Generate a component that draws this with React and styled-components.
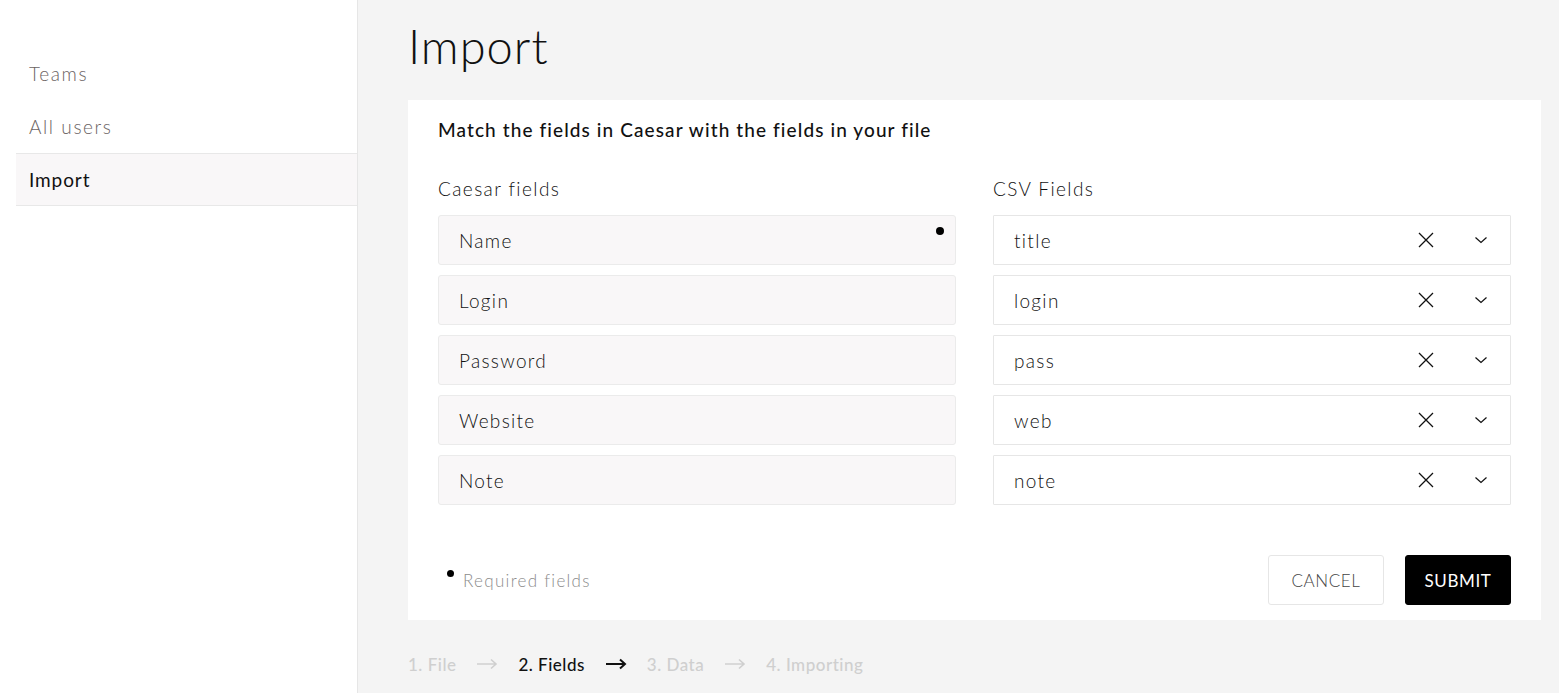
import React from "react";
import styled, { createGlobalStyle } from "styled-components";

const GlobalStyle = createGlobalStyle`
    html, body {
        margin: 0;
        padding: 0;
        background: #f4f4f4;
        font-family: Lato, "Open Sans", sans-serif;
    }
    * {
        box-sizing: border-box;
    }
`;

const Page = styled.div`
    display: flex;
    min-height: 693px;
`;

const SideBar = styled.nav`
    width: 358px;
    flex-shrink: 0;
    background: #fff;
    border-right: 1px solid #e6e6e6;
    padding: 47px 0 0 16px;
`;

const NavItem = styled.div`
    height: 53px;
    display: flex;
    align-items: center;
    padding-left: 13px;
    font-size: 19px;
    letter-spacing: ${props => (props.active ? 0.9 : 1.6)}px;
    font-weight: ${props => (props.active ? 400 : 300)};
    color: ${props => (props.active ? "#111" : "#6b6363")};
    background: ${props => (props.active ? "#f9f7f8" : "transparent")};
    border-top: ${props => (props.active ? "1px solid #e8e8e8" : "none")};
    border-bottom: ${props => (props.active ? "1px solid #e8e8e8" : "none")};
`;

const Main = styled.main`
    flex: 1;
    padding: 0 18px 0 50px;
`;

const Title = styled.h1`
    margin: 0;
    height: 100px;
    padding-top: 18px;
    font-size: 47px;
    font-weight: 300;
    letter-spacing: 1px;
    color: #111;
    line-height: 56px;
`;

const Card = styled.section`
    background: #fff;
    padding: 18px 30px 15px 30px;
`;

const CardHeading = styled.h2`
    margin: 0 0 35px;
    font-size: 19px;
    font-weight: 500;
    letter-spacing: 1.1px;
    color: #111;
    line-height: 24px;
`;

const Columns = styled.div`
    display: grid;
    grid-template-columns: 518px 518px;
    justify-content: space-between;
`;

const Column = styled.div`
    display: flex;
    flex-direction: column;
    gap: 10px;
`;

const ColumnLabel = styled.div`
    font-size: 19px;
    font-weight: 300;
    letter-spacing: 1.4px;
    color: #111;
    line-height: 24px;
    margin-bottom: 4px;
`;

const FieldBox = styled.div`
    position: relative;
    height: 50px;
    display: flex;
    align-items: center;
    padding: 0 17px 0 20px;
    font-size: 19px;
    font-weight: 300;
    letter-spacing: 1.3px;
    color: #111;
    background: ${props => (props.filled ? "#f9f7f8" : "#fff")};
    border: 1px solid ${props => (props.filled ? "#ebebeb" : "#e6e6e6")};
    border-radius: ${props => (props.filled ? "3px" : "1px")};
`;

const RequiredDot = styled.span`
    position: absolute;
    top: 11px;
    right: 11px;
    width: 8px;
    height: 8px;
    border-radius: 50%;
    background: #000;
`;

const FieldValue = styled.span`
    flex: 1;
`;

const IconButton = styled.span`
    display: flex;
    align-items: center;
    justify-content: center;
    width: 24px;
    height: 24px;
    margin-left: ${props => props.gap || 0}px;
`;

const Footer = styled.div`
    display: flex;
    align-items: center;
    justify-content: space-between;
    margin-top: 50px;
`;

const Legend = styled.div`
    display: flex;
    align-items: flex-start;
    gap: 9px;
    padding-left: 9px;
    font-size: 17px;
    font-weight: 300;
    letter-spacing: 1.3px;
    color: #8c8c8c;
`;

const LegendDot = styled.span`
    width: 7px;
    height: 7px;
    border-radius: 50%;
    background: #000;
`;

const Buttons = styled.div`
    display: flex;
    gap: 21px;
`;

const Button = styled.button`
    width: ${props => (props.primary ? 106 : 116)}px;
    height: 50px;
    padding: 0;
    font-family: inherit;
    font-size: 17px;
    letter-spacing: 0.6px;
    font-weight: ${props => (props.primary ? 400 : 300)};
    text-transform: uppercase;
    color: ${props => (props.primary ? "#fff" : "#444")};
    background: ${props => (props.primary ? "#000" : "#fff")};
    border: 1px solid ${props => (props.primary ? "#000" : "#e6e6e6")};
    border-radius: 3px;
`;

const Steps = styled.div`
    display: flex;
    align-items: center;
    gap: 20px;
    height: 88px;
    font-size: 17px;
    font-weight: 500;
    letter-spacing: 0.5px;
`;

const Step = styled.span`
    color: ${props => (props.current ? "#111" : "#cfcfcf")};
`;

const Arrow = styled.span`
    display: flex;
    color: ${props => (props.current ? "#111" : "#cfcfcf")};
`;

const CloseIcon = () => (
    <svg width="18" height="18" viewBox="0 0 18 18">
        <path d="M2 2 L16 16 M16 2 L2 16" stroke="#111" strokeWidth="1.3" fill="none" />
    </svg>
);

const ChevronIcon = () => (
    <svg width="14" height="10" viewBox="0 0 14 10">
        <path d="M1.5 2.5 L7 7.5 L12.5 2.5" stroke="#111" strokeWidth="1.2" fill="none" />
    </svg>
);

const ArrowIcon = ({ current }) => (
    <svg width="22" height="12" viewBox="0 0 22 12">
        <path
            d="M1 6 H20 M15 1.5 L20 6 L15 10.5"
            stroke="currentColor"
            strokeWidth={current ? 2 : 1.6}
            fill="none"
        />
    </svg>
);

const fields = [
    { name: "Name", csv: "title", required: true },
    { name: "Login", csv: "login" },
    { name: "Password", csv: "pass" },
    { name: "Website", csv: "web" },
    { name: "Note", csv: "note" },
];

const steps = ["1. File", "2. Fields", "3. Data", "4. Importing"];

const App = () => {
    const current = 1;

    return (
        <Page>
            <GlobalStyle />
            <SideBar>
                <NavItem>Teams</NavItem>
                <NavItem>All users</NavItem>
                <NavItem active>Import</NavItem>
            </SideBar>
            <Main>
                <Title>Import</Title>
                <Card>
                    <CardHeading>Match the fields in Caesar with the fields in your file</CardHeading>
                    <Columns>
                        <Column>
                            <ColumnLabel>Caesar fields</ColumnLabel>
                            {fields.map(f => (
                                <FieldBox filled key={f.name}>
                                    {f.name}
                                    {f.required && <RequiredDot />}
                                </FieldBox>
                            ))}
                        </Column>
                        <Column>
                            <ColumnLabel>CSV Fields</ColumnLabel>
                            {fields.map(f => (
                                <FieldBox key={f.csv}>
                                    <FieldValue>{f.csv}</FieldValue>
                                    <IconButton>
                                        <CloseIcon />
                                    </IconButton>
                                    <IconButton gap={31}>
                                        <ChevronIcon />
                                    </IconButton>
                                </FieldBox>
                            ))}
                        </Column>
                    </Columns>
                    <Footer>
                        <Legend>
                            <LegendDot />
                            Required fields
                        </Legend>
                        <Buttons>
                            <Button>Cancel</Button>
                            <Button primary>Submit</Button>
                        </Buttons>
                    </Footer>
                </Card>
                <Steps>
                    {steps.map((s, i) => (
                        <React.Fragment key={s}>
                            <Step current={i === current}>{s}</Step>
                            {i < steps.length - 1 && (
                                <Arrow current={i === current}>
                                    <ArrowIcon current={i === current} />
                                </Arrow>
                            )}
                        </React.Fragment>
                    ))}
                </Steps>
            </Main>
        </Page>
    );
};

export default App;
